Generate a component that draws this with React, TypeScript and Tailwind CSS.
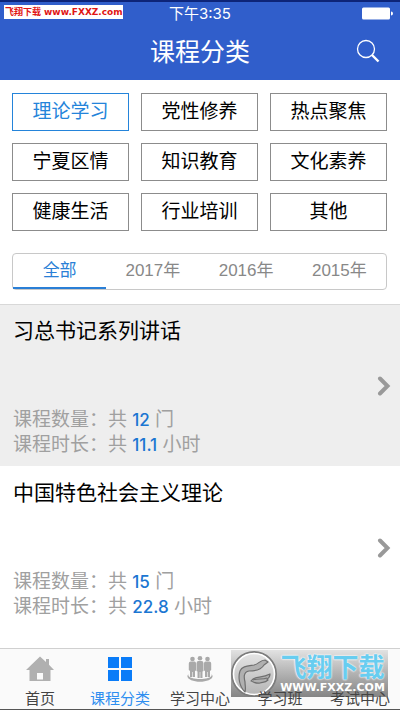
import { useState } from 'react';

const categories = ['理论学习', '党性修养', '热点聚焦', '宁夏区情', '知识教育', '文化素养', '健康生活', '行业培训', '其他'];
const years = ['全部', '2017年', '2016年', '2015年'];

const courses = [
  { title: '习总书记系列讲话', count: '12', hours: '11.1' },
  { title: '中国特色社会主义理论', count: '15', hours: '22.8' },
];

const HomeIcon = () => (
  <svg viewBox="0 0 28 26" className="h-[26px] w-7" fill="#b0b0b0">
    <path d="M14 0.5 L20 6 V3 H23 V8.8 L28 14 H24.5 V25 H3.5 V14 H0 Z" />
    <path d="M11 17h6v6.500h-6z" fill="#fafafa" />
  </svg>
);

const GridIcon = () => (
  <svg viewBox="0 0 26 26" className="h-[26px] w-[26px]" fill="#0a7cf8">
    <path d="M1 1h11v11H1zM14 1h11v11H14zM1 14h11v11H1zM14 14h11v11H14z" />
  </svg>
);

const PeopleIcon = () => (
  <svg viewBox="0 0 28 26" className="h-[26px] w-7" fill="#a9a9a9">
    <circle cx="6.500" cy="3" r="2.300" />
    <circle cx="14" cy="2.300" r="2.300" />
    <circle cx="21.500" cy="3" r="2.300" />
    <path d="M2.800 7.500q0-2 2-2h3.700q1.500 0 1.500 2v7l-1 .5V21H4v-6l-1.200-1z" />
    <path d="M10.500 7.500q0-2.400 2-2.400h3q2 0 2 2.400v7.500l-1 .5v6.500h-5v-6.500l-1-.5z" />
    <path d="M18 7.500q0-2 1.500-2h3.700q2 0 2 2V14l-1.200 1v6h-5v-6l-1-.5z" />
    <path d="M6.500 16v5M14 16v6M21.500 16v5" stroke="#fafafa" strokeWidth="0.600" />
    <path d="M2.500 18C-1.500 22 6 25.800 14 25.800S29.500 22 25.500 18C27 21.500 20 23 14 23S1 21.500 2.500 18z" />
  </svg>
);

const tabs = [
  { label: '首页', icon: <HomeIcon /> },
  { label: '课程分类', icon: <GridIcon /> },
  { label: '学习中心', icon: <PeopleIcon /> },
  { label: '学习班', icon: null },
  { label: '考试中心', icon: null },
];

const Header = () => (
  <header className="relative border-t-2 border-[#0d2478] bg-[#305ecb] text-white">
    <div className="flex h-6 items-center justify-center font-['Inter','Noto_Sans_CJK_SC',sans-serif] text-[15px]">
      下午3:35
    </div>
    <svg viewBox="0 0 31 13" className="absolute top-[5px] right-[7px] h-[13px] w-[31px]" fill="#fff">
      <rect x="0" y="0.500" width="28" height="12" rx="1.500" />
      <path d="M29 4.500q2 0 2 2t-2 2z" />
    </svg>
    <div className="absolute top-[3px] left-1 flex h-[14px] w-[119px] items-center gap-[3px] bg-white pl-px leading-[14px] whitespace-nowrap text-[#e01414]">
      <span className="text-[9px] font-bold">飞翔下载</span>
      <span className="font-['DejaVu_Sans'] text-[9px] font-bold">www.FXXZ.com</span>
    </div>
    <div className="grid h-[54px] grid-cols-[64px_1fr_64px] items-center">
      <h1 className="col-start-2 text-center text-[25px]">课程分类</h1>
      <button aria-label="搜索" className="flex justify-center pb-1">
        <svg viewBox="0 0 24 24" className="h-6 w-6" fill="none" stroke="#fff">
          <circle cx="10" cy="10" r="8.500" strokeWidth="1.300" />
          <path d="M16 16l6.500 6.500" strokeWidth="2.400" />
        </svg>
      </button>
    </div>
  </header>
);

const Watermark = () => (
  <div className="absolute right-3 bottom-[12px] flex h-[47px] w-[157px] items-center bg-linear-to-b from-[#e2e2e2] to-[#858585]">
    <svg viewBox="0 0 46 46" className="h-[46px] w-[46px] shrink-0">
      <defs>
        <linearGradient id="disc" x1="0" y1="0" x2="0" y2="1">
          <stop offset="0" stopColor="#e6e6e6" />
          <stop offset="1" stopColor="#b4b4b4" />
        </linearGradient>
      </defs>
      <circle cx="23" cy="23" r="22" fill="url(#disc)" stroke="#7c7c7c" strokeWidth="2" />
      <circle cx="23" cy="23" r="20.500" fill="none" stroke="#fff" strokeWidth="1.600" />
      <g fill="#b0b0b0" stroke="#6f6f6f" strokeWidth="1.200" strokeLinejoin="round">
        <path d="M14 41C8 35 7 26 9 20c2-5 8-5 14-6 5-1 6-5 11-5l3 2-4 3c-3 5-10 6-15 6-6 1-5 7-4 11 0 4 1 6 0 10z" />
        <path d="M20 30c4-6 10-2 19-7 0 3-1 4-3 5l1 1c-3 3-5 2-8 3-4 1-6-1-9-2z" />
        <path d="M22 29c5-2 9 0 14-2" fill="none" />
      </g>
    </svg>
    <div className="flex flex-1 flex-col items-center">
      <span className="text-[26px] leading-7 font-bold text-[#68cdf0] [text-shadow:0_0_2px_#fff,0_0_2px_#fff]">飞翔下载</span>
      <span className="font-['DejaVu_Sans'] text-[11px] leading-3 font-bold text-white">WWW.FXXZ.COM</span>
    </div>
  </div>
);

export default function App() {
  const [category, setCategory] = useState(categories[0]);
  const [year, setYear] = useState(years[0]);

  return (
    <div className="flex min-h-screen flex-col bg-white font-['Liberation_Sans','Noto_Sans_CJK_SC',sans-serif] text-black">
      <Header />

      <section className="pt-[13px] pr-[13px] pb-[14px] pl-3">
        <div className="grid grid-cols-3 gap-3">
          {categories.map((name) => (
            <button
              key={name}
              onClick={() => setCategory(name)}
              className={`h-[38px] border text-[19px] ${
                name === category ? 'border-[#2484da] text-[#2484da]' : 'border-[#8c8c8c]'
              }`}
            >
              {name}
            </button>
          ))}
        </div>
        <div className="mt-[22px] grid h-[37px] grid-cols-4 rounded-[4px] border border-[#c8c8c8]">
          {years.map((name) => (
            <button
              key={name}
              onClick={() => setYear(name)}
              className={`border-b-2 text-[17px] ${
                name === year ? 'border-[#2a7fd6] text-[#2a7fd6]' : 'border-transparent text-[#888888]'
              }`}
            >
              {name}
            </button>
          ))}
        </div>
      </section>

      <main className="flex-1">
        {courses.map((course) => (
          <a
            key={course.title}
            href="#"
            className="flex h-[162px] items-center justify-between border-t border-white pr-[9px] pl-[13px] first:border-[#d8d8d8] first:bg-[#eeeeee]"
          >
            <div className="flex h-full flex-col justify-between pt-3 pb-[9px]">
              <h2 className="text-[21px] leading-7">{course.title}</h2>
              <div className="text-[19px] leading-[25px] text-[#a0a0a0]">
                <p>
                  课程数量：共 <span className="font-['Inter'] text-[17px] leading-6 font-medium text-[#1b76d2]">{course.count}</span> 门
                </p>
                <p>
                  课程时长：共 <span className="font-['Inter'] text-[17px] leading-6 font-medium text-[#1b76d2]">{course.hours}</span> 小时
                </p>
              </div>
            </div>
            <svg viewBox="0 0 14 20" className="h-5 w-[14px]" fill="none" stroke="#999" strokeWidth="4">
              <path d="M3 2.500l7.500 7.500L3 17.500" strokeLinecap="round" />
            </svg>
          </a>
        ))}
      </main>

      <nav className="relative grid h-[62px] grid-cols-5 border-t border-b border-t-[#d0d0d0] border-b-[#555555] bg-[#fafafa]">
        <Watermark />
        {tabs.map(({ label, icon }) => (
          <a
            key={label}
            href="#"
            className={`relative flex flex-col items-center justify-between pt-[7px] text-[15px] leading-5 ${
              label === '课程分类' ? 'text-[#2e8ef0]' : 'text-[#444444]'
            }`}
          >
            <span className="h-[26px]">{icon}</span>
            <span className="whitespace-nowrap">{label}</span>
          </a>
        ))}
      </nav>
    </div>
  );
}
